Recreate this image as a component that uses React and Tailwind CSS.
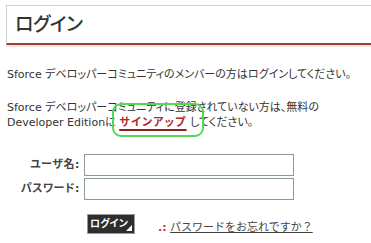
export default function App() {
  const font = { fontFamily: '"DejaVu Sans", "Noto Sans CJK JP", sans-serif' };
  return (
    <div className="relative w-[371px] h-[243px] bg-white text-[#333] overflow-hidden" style={font}>
      {/* Title bar */}
      <div className="ml-[6px] mt-[5px] h-[40px] border-t border-l border-[#cfcfcf] border-b-2 border-b-[#9a3e38] flex items-center pl-[8px] shadow-[0_2px_0_#fbe3e1]">
        <h1 className="text-[19px] font-medium leading-none tracking-[-0.5px] [font-feature-settings:'palt'] text-[#333]">ログイン</h1>
      </div>

      <div className="px-[7px] text-[11px] leading-[15px] [font-feature-settings:'palt']">
        <p className="mt-[22px] whitespace-nowrap">Sforce デベロッパーコミュニティのメンバーの方はログインしてください。</p>
        <p className="relative mt-[18px] whitespace-nowrap">
          Sforce デベロッパーコミュニティに登録されていない方は、無料の
          <br />
          Developer Editionに{' '}
          <a className="font-bold text-[#b0282a] underline decoration-[#8a2020] decoration-[1.5px] underline-offset-[3px] tracking-[1.2px]">サインアップ</a>{' '}
          してください。
          <span className="absolute left-[105px] top-[3px] w-[92px] h-[34px] rounded-[9px] border-2 border-[#55d655]" />
        </p>
      </div>

      {/* Form */}
      <div className="mt-[24px] grid grid-cols-[80px_210px] gap-x-[4px] gap-y-[2px] items-center text-[11px] [font-feature-settings:'palt']">
        <label className="text-right font-bold text-[#444] tracking-[0.5px]">ユーザ名:</label>
        <input className="h-[22px] border border-[#8c9a9a] outline-none" />
        <label className="text-right font-bold text-[#444] tracking-[0.5px]">パスワード:</label>
        <input type="password" className="h-[22px] border border-[#8c9a9a] outline-none" />
      </div>

      <div className="flex items-end mt-[14px] pl-[87px]">
        <button className="relative h-[20px] w-[48px] bg-[#2e2e2e] border border-[#999] text-white text-[10px] font-bold leading-none text-left pl-[2px] [font-feature-settings:'palt']">
          ログイン
          <span className="absolute right-[2px] bottom-[2px] w-0 h-0 border-l-[6px] border-l-transparent border-b-[6px] border-b-white" />
        </button>
        <div className="ml-[23px] mb-[-2px] text-[11px] whitespace-nowrap">
          <span className="text-[#c03030] font-bold">.:</span>{' '}
          <a className="underline text-[#444]">パスワードをお忘れですか？</a>
        </div>
      </div>
    </div>
  );
}
